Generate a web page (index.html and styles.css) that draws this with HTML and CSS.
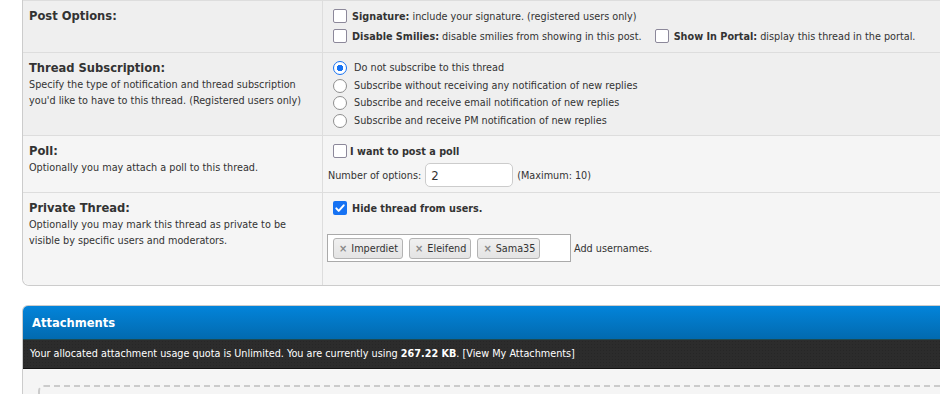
FILE: index.html
```html
<!DOCTYPE html>
<html lang="en">
<head>
    <meta charset="UTF-8">
    <meta name="viewport" content="width=device-width, initial-scale=1.0">
    <title>New Thread - Options</title>
    <link rel="stylesheet" href="styles.css">
</head>
<body>
<div class="page">

    <!-- Thread options table -->
    <table class="tborder">
        <tr class="row-post">
            <td class="trow2 label-cell"><strong class="title">Post Options:</strong></td>
            <td class="trow2">
                <div class="opt-line">
                    <label><input type="checkbox" class="check"> <strong>Signature:</strong> include your signature. (registered users only)</label>
                </div>
                <div class="opt-line">
                    <label><input type="checkbox" class="check"> <strong>Disable Smilies:</strong> disable smilies from showing in this post.</label>
                    <label class="portal"><input type="checkbox" class="check"> <strong>Show In Portal:</strong> display this thread in the portal.</label>
                </div>
            </td>
        </tr>
        <tr class="row-sub">
            <td class="trow2 label-cell">
                <strong class="title">Thread Subscription:</strong>
                <span class="desc">Specify the type of notification and thread subscription you'd like to have to this thread. (Registered users only)</span>
            </td>
            <td class="trow2">
                <div class="radio-line"><label><input type="radio" name="subscription" class="radio" checked> Do not subscribe to this thread</label></div>
                <div class="radio-line"><label><input type="radio" name="subscription" class="radio"> Subscribe without receiving any notification of new replies</label></div>
                <div class="radio-line"><label><input type="radio" name="subscription" class="radio"> Subscribe and receive email notification of new replies</label></div>
                <div class="radio-line"><label><input type="radio" name="subscription" class="radio"> Subscribe and receive PM notification of new replies</label></div>
            </td>
        </tr>
        <tr class="row-poll">
            <td class="trow1 label-cell">
                <strong class="title">Poll:</strong>
                <span class="desc">Optionally you may attach a poll to this thread.</span>
            </td>
            <td class="trow1">
                <div class="opt-line">
                    <label class="tight"><input type="checkbox" class="check"><strong>I want to post a poll</strong></label>
                </div>
                <div class="num-line">
                    Number of options: <input type="text" class="textbox" value="2"> (Maximum: 10)
                </div>
            </td>
        </tr>
        <tr class="row-private">
            <td class="trow1 label-cell last-left">
                <strong class="title">Private Thread:</strong>
                <span class="desc">Optionally you may mark this thread as private to be visible by specific users and moderators.</span>
            </td>
            <td class="trow1">
                <div class="opt-line">
                    <label><input type="checkbox" class="check" checked> <strong>Hide thread from users.</strong></label>
                </div>
                <div class="user-line">
                    <div class="tagbox">
                        <span class="tag"><span class="tag-x">&#215;</span>Imperdiet</span>
                        <span class="tag"><span class="tag-x">&#215;</span>Eleifend</span>
                        <span class="tag"><span class="tag-x">&#215;</span>Sama35</span>
                    </div>
                    <span class="hint">Add usernames.</span>
                </div>
            </td>
        </tr>
    </table>

    <!-- Attachments -->
    <div class="attach">
        <div class="thead"><strong>Attachments</strong></div>
        <div class="tcat">Your allocated attachment usage quota is Unlimited. You are currently using <strong>267.22 KB</strong>. [View My Attachments]</div>
        <div class="attach-body">
            <div class="dropzone"></div>
        </div>
    </div>

</div>
</body>
</html>
```

FILE: styles.css
```css
html, body {
    margin: 0;
    padding: 0;
    background: #fff;
    overflow: hidden;
}
body {
    font-family: "DejaVu Sans Condensed", "DejaVu Sans", sans-serif;
    font-size: 10.75px;
    color: #333;
}
.page {
    width: 1000px;
    padding-left: 22px;
}
.tborder {
    width: 960px;
    border: 1px solid #ccc;
    border-top: 0;
    border-radius: 0 0 7px 7px;
    border-spacing: 0;
    table-layout: fixed;
}
.tborder td {
    padding: 6px 6px 0;
    vertical-align: top;
    border-bottom: 1px solid #ddd;
}
.tborder tr:first-child td {
    border-top: 1px solid #ddd;
}
.tborder tr:last-child td {
    border-bottom: 0;
}
.trow1 {
    background: #f5f5f5;
}
.trow2 {
    background: #efefef;
}
.label-cell {
    width: 287px;
    border-right: 1px solid #ddd;
}
.last-left {
    border-bottom-left-radius: 7px;
}
.row-post { height: 53px; }
.row-sub { height: 83px; }
.row-poll { height: 57px; }
.row-private { height: 92px; }

.title {
    display: block;
    font-size: 12.8px;
    line-height: 18px;
}
.desc {
    display: block;
    line-height: 16px;
}

/* checkboxes and radios */
.check, .radio {
    appearance: none;
    -webkit-appearance: none;
    width: 14px;
    height: 14px;
    margin: 0 2px 0 4px;
    vertical-align: -3px;
    background: #fff;
    border: 1.5px solid #8c889a;
    box-sizing: border-box;
}
.check {
    border-radius: 2px;
}
.check:checked {
    border: 0;
    background: #1672f3 url("data:image/svg+xml,%3Csvg xmlns='http://www.w3.org/2000/svg' viewBox='0 0 14 14'%3E%3Cpath d='M3.3 7.4l2.4 2.5 5-5.6' fill='none' stroke='%23fff' stroke-width='2' stroke-linecap='round' stroke-linejoin='round'/%3E%3C/svg%3E") center/14px 14px no-repeat;
}
.radio {
    border-radius: 50%;
    border-color: #8e8e8e;
    border-width: 1px;
    vertical-align: -4px;
}
.radio:checked {
    border: 1.5px solid #1672f3;
    background: radial-gradient(circle, #1672f3 0 3px, #fff 3.5px);
}
.opt-line {
    line-height: 20px;
    white-space: nowrap;
}
.portal {
    margin-left: 6px;
}
.tight .check {
    margin-right: 3px;
}
.radio-line {
    line-height: 17.5px;
    white-space: nowrap;
}
.radio-line .radio {
    margin-right: 4px;
}

/* poll */
.num-line {
    display: flex;
    align-items: center;
    gap: 4px;
    margin-left: -1px;
    margin-top: 1px;
}
.textbox {
    width: 88px;
    height: 24px;
    box-sizing: border-box;
    padding: 2px 5px;
    border: 1px solid #ccc;
    border-radius: 5px;
    font-family: inherit;
    font-size: 13px;
    color: #333;
    background: #fff;
}

/* private thread users */
.user-line {
    display: flex;
    align-items: center;
    margin-top: 15px;
    margin-left: -2px;
}
.tagbox {
    display: flex;
    gap: 6px;
    width: 244px;
    height: 28px;
    box-sizing: border-box;
    padding: 3px 5px;
    border: 1px solid #aaa;
    background: #fff;
}
.tag {
    display: flex;
    align-items: center;
    height: 21px;
    box-sizing: border-box;
    padding: 0 4px 0 5px;
    border: 1px solid #b3b3b3;
    border-radius: 3px;
    background: linear-gradient(#f0f0f0, #e4e4e4);
    color: #333;
}
.tag-x {
    font-weight: bold;
    color: #888;
    font-size: 11px;
    margin-right: 4px;
}
.hint {
    margin-left: 3px;
}

/* attachments box */
.attach {
    width: 960px;
    margin-top: 19px;
    border: 1px solid #ccc;
    border-bottom: 0;
    border-radius: 6px 6px 0 0;
    overflow: hidden;
}
.thead {
    height: 34px;
    box-sizing: border-box;
    padding: 9px 9px 0;
    background: linear-gradient(#0384da, #026aaf);
    border-bottom: 1px solid #1c4a52;
    color: #fff;
    font-size: 12.8px;
}
.tcat {
    height: 29px;
    box-sizing: border-box;
    padding: 7px 7px 0;
    background: #2c2c2c radial-gradient(#262626 0.8px, transparent 1px) 0 0 / 3px 3px;
    border-bottom: 1px solid #141414;
    color: #fff;
}
.attach-body {
    background: #f5f5f5;
    padding: 16px 15px;
    height: 60px;
}
.dropzone {
    height: 60px;
    border: 2px dashed #cbcbcb;
    border-radius: 6px;
}
```
